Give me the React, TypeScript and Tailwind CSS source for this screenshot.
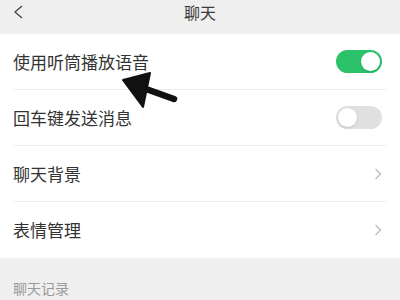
const font = { fontFamily: '"Noto Sans CJK SC", "Noto Sans", sans-serif' };

function Toggle({ on }: { on: boolean }) {
  return (
    <span
      className={`relative inline-flex h-[23px] w-[46px] items-center rounded-full ${
        on ? "bg-[#2bc26a]" : "bg-[#e0e0e0]"
      }`}
    >
      <span
        className={`absolute top-[2px] h-[19px] w-[19px] rounded-full bg-white shadow-sm ${
          on ? "right-[2px]" : "left-[2px]"
        }`}
      />
    </span>
  );
}

function Chevron() {
  return (
    <svg width="8" height="12" viewBox="0 0 8 12" fill="none">
      <path d="M1.5 1l5 5-5 5" stroke="#bdbdbd" strokeWidth="1.3" />
    </svg>
  );
}

type Row = { label: string; right: "on" | "off" | "more" };

const rows: Row[] = [
  { label: "使用听筒播放语音", right: "on" },
  { label: "回车键发送消息", right: "off" },
  { label: "聊天背景", right: "more" },
  { label: "表情管理", right: "more" },
];

export default function App() {
  return (
    <div className="relative h-[300px] w-[400px] overflow-hidden bg-[#efefef]" style={font}>
      <div className="relative flex h-[34px] justify-center pt-[4px]">
        <svg className="absolute left-[12px] top-[5px]" width="12" height="14" viewBox="0 0 12 14" fill="none">
          <path d="M10 1L3 7l7 6" stroke="#444" strokeWidth="1.3" />
        </svg>
        <span className="text-[16px] leading-[17px] text-[#3a3a3a]">聊天</span>
      </div>

      <div className="bg-white">
        {rows.map((row, i) => (
          <div key={row.label} className="px-[13px]">
            <div
              className={`flex h-[56px] items-center justify-between ${
                i < rows.length - 1 ? "border-b border-[#ededed]" : ""
              }`}
            >
              <span className="text-[17px] text-[#333]">{row.label}</span>
              <span className="mr-[5px] flex items-center">
                {row.right === "more" ? <Chevron /> : <Toggle on={row.right === "on"} />}
              </span>
            </div>
          </div>
        ))}
      </div>

      <div className="px-[13px] pt-[23px] text-[14px] leading-none text-[#9a9a9a]">聊天记录</div>

      <svg className="absolute left-[118px] top-[68px]" width="64" height="44" viewBox="0 0 64 44">
        <path d="M14 16 L56 31" stroke="#111" strokeWidth="6.5" strokeLinecap="round" />
        <path d="M5 12 L32 5 L25 39 Z" fill="#111" stroke="#111" strokeWidth="2" strokeLinejoin="round" />
      </svg>
    </div>
  );
}
